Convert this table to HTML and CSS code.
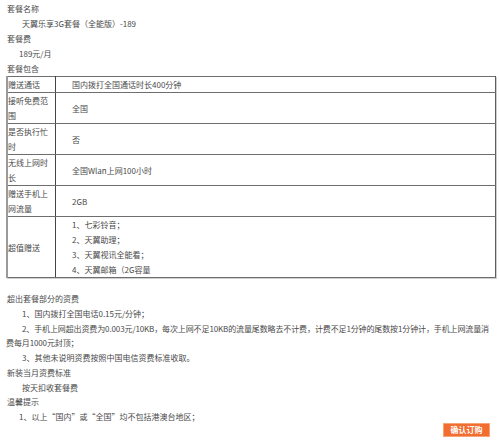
FILE: index.html
```html
<!DOCTYPE html>
<html lang="zh-CN">
<head>
<meta charset="utf-8">
<title>套餐详情</title>
<link rel="stylesheet" href="styles.css">
</head>
<body>
<div class="page">
  <div class="top">
    <div class="label">套餐名称</div>
    <div class="value">天翼乐享3G套餐（全能版）-189</div>
    <div class="label">套餐费</div>
    <div class="value narrow">189元/月</div>
    <div class="label">套餐包含</div>
  </div>
  <table class="plan">
    <tr><td class="key">赠送通话</td><td class="val">国内拨打全国通话时长400分钟</td></tr>
    <tr><td class="key">接听免费范围</td><td class="val">全国</td></tr>
    <tr><td class="key">是否执行忙时</td><td class="val">否</td></tr>
    <tr><td class="key">无线上网时长</td><td class="val">全国Wlan上网100小时</td></tr>
    <tr><td class="key">赠送手机上网流量</td><td class="val">2GB</td></tr>
    <tr><td class="key">超值赠送</td><td class="val">
      <div>1、七彩铃音；</div>
      <div>2、天翼助理；</div>
      <div>3、天翼视讯全能看；</div>
      <div>4、天翼邮箱（2G容量</div>
    </td></tr>
  </table>
  <div class="notes">
    <div class="label">超出套餐部分的资费</div>
    <p class="para">1、国内拨打全国电话0.15元/分钟；</p>
    <p class="para long">2、手机上网超出资费为0.003元/10KB，每次上网不足10KB的流量尾数略去不计费，计费不足1分钟的尾数按1分钟计，手机上网流量消费每月1000元封顶；</p>
    <p class="para">3、其他未说明资费按照中国电信资费标准收取。</p>
    <div class="label">新装当月资费标准</div>
    <p class="para">按天扣收套餐费</p>
    <div class="label">温馨提示</div>
    <p class="para narrow">1、以上“国内”或“全国”均不包括港澳台地区；</p>
  </div>
  <div class="actions">
    <button class="buy" type="button">确认订购</button>
  </div>
</div>
</body>
</html>
```

FILE: styles.css
```css
html, body {
  margin: 0;
  padding: 0;
  background: #ffffff;
}

body {
  font-family: "Noto Sans CJK SC", "Liberation Sans", sans-serif;
  font-size: 8px;
  color: #4a4a4a;
}

.page {
  padding: 1px 4px 0 6px;
}

.top {
  line-height: 15px;
}

.label {
  padding-left: 1px;
}

.value {
  padding-left: 16px;
}

.value.narrow {
  padding-left: 13px;
}

.plan {
  width: 490px;
  border-collapse: collapse;
  border-top: 1px solid #6e6e6e;
  border-left: 2px solid #9a9a9a;
  border-right: 1px solid #5e5e5e;
  border-bottom: 1px solid #5e5e5e;
  box-shadow: 1px 1px 0 #cfcfcf;
  line-height: 15px;
}

.plan td {
  padding: 0;
  vertical-align: middle;
  border-bottom: 1px solid #6e6e6e;
}

.plan td.key {
  width: 47px;
  border-right: 1px solid #444444;
}

.plan td.val {
  padding-left: 16px;
}

.notes {
  margin-top: 14px;
  line-height: 14.75px;
}

.para {
  margin: 0;
  text-indent: 16px;
}

.para.long {
  letter-spacing: -0.12px;
}

.para.narrow {
  text-indent: 13px;
}

.actions {
  display: flex;
  justify-content: flex-end;
  padding-right: 6px;
  margin-top: -2px;
}

.buy {
  font-family: "Noto Sans CJK SC", "Liberation Sans", sans-serif;
  font-size: 8px;
  font-weight: bold;
  color: #ffffff;
  background: #f26d30;
  border: 1px solid #f7a479;
  padding: 0 6px;
  height: 14px;
  line-height: 12px;
  width: 47px;
  cursor: pointer;
}
```
